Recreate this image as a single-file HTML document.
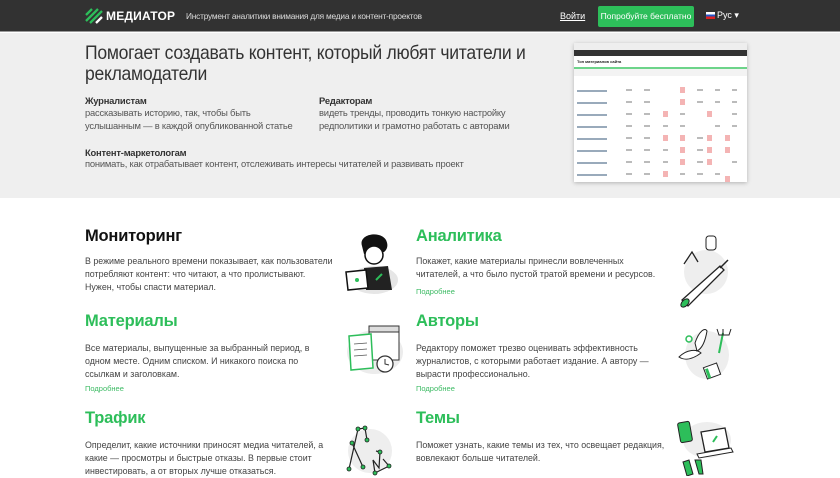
<!DOCTYPE html>
<html><head><meta charset="utf-8"><style>
*{margin:0;padding:0;box-sizing:border-box}
body{width:840px;height:476px;overflow:hidden;background:#fff;font-family:"Liberation Sans",sans-serif;color:#333;position:relative}
.a{position:absolute;white-space:nowrap}
.hdr{position:absolute;left:0;top:0;width:840px;height:32px;background:#323232;border-bottom:1px solid #999}
.hero{position:absolute;left:0;top:33px;width:840px;height:165px;background:#efefef}
.h1{font-size:19.5px;line-height:21px;color:#333;letter-spacing:-0.3px;transform:scaleX(0.9);transform-origin:0 0}
.b{font-weight:bold;font-size:9.4px;color:#333;letter-spacing:-0.2px}
.t{font-size:9.4px;color:#555;letter-spacing:-0.2px;line-height:12.5px}
.h2{font-size:16.5px;font-weight:bold;letter-spacing:-0.2px}
.p{font-size:8.85px;color:#444;line-height:13px;white-space:normal;width:250px}
.m{font-size:7.5px;color:#3dbb64}
.g{fill:#bbb}
</style></head><body>
<div class="hdr"></div>
<svg class="a" style="left:85px;top:8px" width="18" height="16" viewBox="0 0 18 16"><g stroke="#2dbe5a" stroke-width="2.3"><line x1="1" y1="7" x2="7" y2="1"/><line x1="1" y1="13" x2="13" y2="1"/><line x1="5" y1="15" x2="17" y2="3"/></g><g stroke="#fff" stroke-width="2.3"><line x1="11" y1="15" x2="17" y2="9"/></g></svg>
<div class="a" style="left:106px;top:9px;font-size:12px;font-weight:bold;color:#fff;letter-spacing:0.2px">МЕДИАТОР</div>
<div class="a" style="left:186px;top:11px;font-size:8.3px;color:#ddd;letter-spacing:-0.2px">Инструмент аналитики внимания для медиа и контент-проектов</div>
<div class="a" style="left:560px;top:11px;font-size:9px;color:#fff;text-decoration:underline">Войти</div>
<div class="a" style="left:598px;top:6px;width:96px;height:21px;background:#2dbe5a;border-radius:2px;color:#fff;font-size:8.5px;text-align:center;line-height:21px">Попробуйте бесплатно</div>
<div class="a" style="left:706px;top:12px;width:9px;height:7px;background:linear-gradient(#fff 33%,#2456c8 33% 66%,#d22 66%)"></div>
<div class="a" style="left:717px;top:10px;font-size:9px;color:#fff">Рус ▾</div>

<div class="hero"></div>
<div class="a h1" style="left:85px;top:43px">Помогает создавать контент, который любят читатели и<br>рекламодатели</div>
<div class="a b" style="left:85px;top:95px">Журналистам</div>
<div class="a t" style="left:85px;top:107px">рассказывать историю, так, чтобы быть<br>услышанным — в каждой опубликованной статье</div>
<div class="a b" style="left:319px;top:95px">Редакторам</div>
<div class="a t" style="left:319px;top:107px">видеть тренды, проводить тонкую настройку<br>редполитики и грамотно работать с авторами</div>
<div class="a b" style="left:85px;top:147px">Контент-маркетологам</div>
<div class="a t" style="left:85px;top:158px">понимать, как отрабатывает контент, отслеживать интересы читателей и развивать проект</div>

<div class="a" style="left:574px;top:43px;width:173px;height:139px;background:#fff;box-shadow:0 1px 4px rgba(0,0,0,.25);overflow:hidden">
 <div style="height:7px;background:#eee"></div>
 <div style="height:6px;background:#333"></div>
 <div style="font-size:4px;font-weight:bold;padding:3px 3px;color:#222">Топ материалов сайта</div>
 <div style="height:2px;background:#6dd48a"></div>
 <div style="height:7px;background:#f3f3f3"></div>
 <svg width="173" height="110">
  <g fill="#9ab">
   <rect x="3" y="14" width="30" height="2"/><rect x="3" y="26" width="30" height="2"/><rect x="3" y="38" width="30" height="2"/><rect x="3" y="50" width="30" height="2"/><rect x="3" y="62" width="30" height="2"/><rect x="3" y="74" width="30" height="2"/><rect x="3" y="86" width="30" height="2"/><rect x="3" y="98" width="30" height="2"/>
  </g>
  <g class="g">
   <rect x="52" y="13" width="6" height="2"/><rect x="70" y="13" width="6" height="2"/><rect x="123" y="13" width="6" height="2"/><rect x="141" y="13" width="5" height="2"/><rect x="158" y="13" width="5" height="2"/>
   <rect x="52" y="25" width="6" height="2"/><rect x="70" y="25" width="6" height="2"/><rect x="123" y="25" width="6" height="2"/><rect x="141" y="25" width="5" height="2"/><rect x="158" y="25" width="5" height="2"/>
   <rect x="52" y="37" width="6" height="2"/><rect x="70" y="37" width="6" height="2"/><rect x="106" y="37" width="5" height="2"/><rect x="158" y="37" width="5" height="2"/>
   <rect x="52" y="49" width="6" height="2"/><rect x="70" y="49" width="6" height="2"/><rect x="89" y="49" width="5" height="2"/><rect x="106" y="49" width="5" height="2"/><rect x="141" y="49" width="5" height="2"/><rect x="158" y="49" width="5" height="2"/>
   <rect x="52" y="61" width="6" height="2"/><rect x="70" y="61" width="6" height="2"/><rect x="123" y="61" width="6" height="2"/>
   <rect x="52" y="73" width="6" height="2"/><rect x="70" y="73" width="6" height="2"/><rect x="89" y="73" width="5" height="2"/><rect x="123" y="73" width="6" height="2"/>
   <rect x="52" y="85" width="6" height="2"/><rect x="70" y="85" width="6" height="2"/><rect x="89" y="85" width="5" height="2"/><rect x="123" y="85" width="6" height="2"/><rect x="158" y="85" width="5" height="2"/>
   <rect x="52" y="97" width="6" height="2"/><rect x="70" y="97" width="6" height="2"/><rect x="106" y="97" width="5" height="2"/><rect x="123" y="97" width="6" height="2"/><rect x="141" y="97" width="5" height="2"/>
  </g>
  <g fill="#f4b4b4">
   <rect x="106" y="11" width="5" height="6"/><rect x="106" y="23" width="5" height="6"/><rect x="89" y="35" width="5" height="6"/><rect x="133" y="35" width="5" height="6"/><rect x="89" y="59" width="5" height="6"/><rect x="106" y="59" width="5" height="6"/><rect x="133" y="59" width="5" height="6"/><rect x="151" y="59" width="5" height="6"/><rect x="106" y="71" width="5" height="6"/><rect x="133" y="71" width="5" height="6"/><rect x="151" y="71" width="5" height="6"/><rect x="106" y="83" width="5" height="6"/><rect x="133" y="83" width="5" height="6"/><rect x="89" y="95" width="5" height="6"/><rect x="151" y="100" width="5" height="6"/>
  </g>
 </svg>
</div>

<div class="a h2" style="left:85px;top:227px;color:#111">Мониторинг</div>
<div class="a p" style="left:85px;top:255px">В режиме реального времени показывает, как пользователи потребляют контент: что читают, а что пролистывают. Нужен, чтобы спасти материал.</div>
<div class="a h2" style="left:85px;top:312px;color:#2dbe5a">Материалы</div>
<div class="a p" style="left:85px;top:342px">Все материалы, выпущенные за выбранный период, в одном месте. Одним списком. И никакого поиска по ссылкам и заголовкам.</div>
<div class="a m" style="left:85px;top:384px">Подробнее</div>
<div class="a h2" style="left:85px;top:409px;color:#2dbe5a">Трафик</div>
<div class="a p" style="left:85px;top:439px">Определит, какие источники приносят медиа читателей, а какие — просмотры и быстрые отказы. В первые стоит инвестировать, а от вторых лучше отказаться.</div>

<div class="a h2" style="left:416px;top:227px;color:#2dbe5a">Аналитика</div>
<div class="a p" style="left:416px;top:255px">Покажет, какие материалы принесли вовлеченных читателей, а что было пустой тратой времени и ресурсов.</div>
<div class="a m" style="left:416px;top:287px">Подробнее</div>
<div class="a h2" style="left:416px;top:312px;color:#2dbe5a">Авторы</div>
<div class="a p" style="left:416px;top:342px">Редактору поможет трезво оценивать эффективность журналистов, с которыми работает издание. А автору — вырасти профессионально.</div>
<div class="a m" style="left:416px;top:384px">Подробнее</div>
<div class="a h2" style="left:416px;top:409px;color:#2dbe5a">Темы</div>
<div class="a p" style="left:416px;top:439px">Поможет узнать, какие темы из тех, что освещает редакция, вовлекают больше читателей.</div>

<!-- left illustrations -->
<svg class="a" style="left:340px;top:230px" width="60" height="70" viewBox="0 0 60 70"><ellipse cx="34" cy="50" rx="24" ry="14" fill="#e6e6e6"/><path d="M22 16 C18 4 40 0 46 10 C50 18 44 22 44 22 L24 24Z" fill="#111"/><circle cx="34" cy="25" r="9" fill="#fff" stroke="#111" stroke-width="1.5"/><path d="M24 38 L48 36 L52 60 L26 60Z" fill="#222"/><line x1="36" y1="50" x2="42" y2="44" stroke="#2dbe5a" stroke-width="2"/><path d="M6 42 L26 40 L28 58 L8 60Z" fill="#fff" stroke="#111" stroke-width="1.5"/><circle cx="17" cy="50" r="2" fill="#2dbe5a"/></svg>
<svg class="a" style="left:345px;top:322px" width="60" height="58" viewBox="0 0 60 58"><ellipse cx="30" cy="30" rx="28" ry="22" fill="#ececec"/><rect x="24" y="4" width="30" height="34" fill="#fff" stroke="#333"/><rect x="24" y="4" width="30" height="6" fill="#ddd" stroke="#333"/><path d="M4 14 L26 12 L28 46 L6 48Z" fill="#fff" stroke="#2dbe5a" stroke-width="1.5"/><g stroke="#555" stroke-width=".8"><line x1="9" y1="22" x2="22" y2="21"/><line x1="9" y1="28" x2="22" y2="27"/><line x1="9" y1="34" x2="22" y2="33"/></g><circle cx="40" cy="42" r="8" fill="#fff" stroke="#333" stroke-width="1.3"/><path d="M40 37 L40 42 L44 43" stroke="#333" fill="none"/></svg>
<svg class="a" style="left:345px;top:423px" width="50" height="53" viewBox="0 0 50 53"><ellipse cx="25" cy="28" rx="22" ry="22" fill="#eee"/><g stroke="#222" stroke-width="1.2" fill="none"><path d="M13 6 L4 46"/><path d="M7 20 L18 44"/><path d="M13 6 L20 5 L22 17"/><path d="M31 28 L35 29 L34 45 L28 37 L30 50 L44 43 L38 36"/></g><g fill="#2dbe5a" stroke="#222" stroke-width=".8"><circle cx="13" cy="6" r="2"/><circle cx="20" cy="5" r="2"/><circle cx="22" cy="17" r="2"/><circle cx="7" cy="20" r="2"/><circle cx="18" cy="44" r="2"/><circle cx="4" cy="46" r="2"/><circle cx="35" cy="29" r="2"/><circle cx="30" cy="50" r="2"/><circle cx="44" cy="43" r="2"/></g></svg>

<!-- right illustrations -->
<svg class="a" style="left:676px;top:232px" width="56" height="76" viewBox="0 0 56 76"><ellipse cx="30" cy="40" rx="22" ry="22" fill="#eee"/><rect x="30" y="4" width="10" height="14" rx="3" fill="#fff" stroke="#222"/><path d="M8 32 L16 20 L22 30" stroke="#222" fill="none" stroke-width="1.3"/><path d="M6 68 L44 34 L48 38 L12 74Z" fill="#fff" stroke="#222" stroke-width="1.3"/><line x1="44" y1="36" x2="52" y2="28" stroke="#222" stroke-width="1.5"/><ellipse cx="9" cy="71" rx="3" ry="5" transform="rotate(45 9 71)" fill="#2dbe5a" stroke="#222"/></svg>
<svg class="a" style="left:675px;top:323px" width="60" height="62" viewBox="0 0 60 62"><ellipse cx="32" cy="32" rx="22" ry="24" fill="#eee"/><path d="M4 34 C12 26 22 26 26 30 C18 36 10 38 4 34Z" fill="#fff" stroke="#222"/><path d="M20 20 C24 8 30 4 32 8 C30 20 26 26 22 28Z" fill="#fff" stroke="#222"/><circle cx="14" cy="16" r="3" fill="none" stroke="#2dbe5a" stroke-width="1.5"/><path d="M44 30 L48 10" stroke="#2dbe5a" stroke-width="2"/><path d="M42 6 L44 12 L54 12 L56 6 M48 6 L48 12" stroke="#222" fill="none"/><rect x="30" y="42" width="14" height="12" transform="rotate(-20 37 48)" fill="#fff" stroke="#222"/><rect x="31" y="44" width="3" height="10" transform="rotate(-20 37 48)" fill="#2dbe5a"/></svg>
<svg class="a" style="left:675px;top:418px" width="60" height="58" viewBox="0 0 60 58"><ellipse cx="32" cy="22" rx="24" ry="18" fill="#eee"/><rect x="4" y="4" width="12" height="20" rx="2" transform="rotate(-10 10 14)" fill="#2dbe5a" stroke="#222"/><path d="M26 14 L50 10 L54 30 L30 34Z" fill="#fff" stroke="#222" stroke-width="1.3"/><path d="M22 36 L56 30 L58 34 L24 40Z" fill="#fff" stroke="#222"/><line x1="38" y1="24" x2="42" y2="18" stroke="#2dbe5a" stroke-width="2"/><path d="M8 44 L12 58 L18 56 L14 42Z M20 42 L24 56 L28 56 L26 42Z" fill="#2dbe5a" stroke="#222"/></svg>
</body></html>
